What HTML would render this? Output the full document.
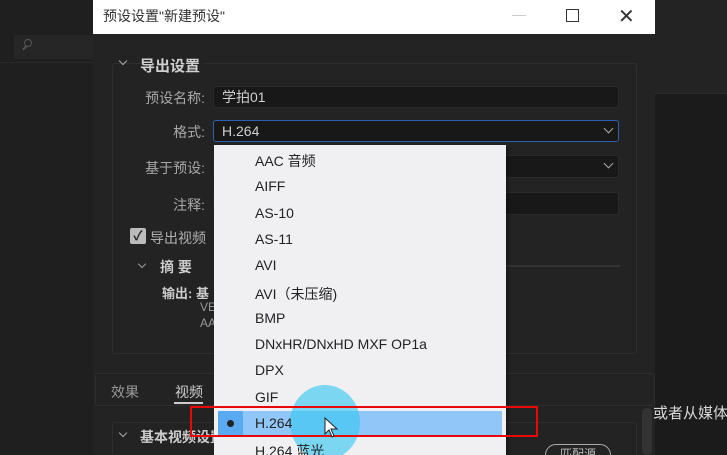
<!DOCTYPE html>
<html><head><meta charset="utf-8"><style>
*{margin:0;padding:0;box-sizing:border-box}
html,body{width:727px;height:455px;overflow:hidden}
body{background:#1f1f20;font-family:"Liberation Sans","Noto Sans CJK SC",sans-serif;position:relative;color:#b8b8b8}
.a{position:absolute;white-space:nowrap}
.lbl{position:absolute;font-size:14px;color:#a8a8a8;text-align:right;width:110px;left:95px}
.inp{position:absolute;left:213px;width:406px;height:22px;background:#181818;border:1px solid #2a2a2a;border-radius:3px;font-size:14px;color:#cfcfcf;padding-left:8px;line-height:20px}
.it{position:absolute;left:255px;font-size:14px;color:#222;white-space:nowrap}
.chev{position:absolute;right:6px;top:4px;width:7px;height:7px;border-right:1.5px solid #aaa;border-bottom:1.5px solid #aaa;transform:rotate(45deg)}
</style></head><body>
<div class="a" style="left:14px;top:35px;width:79px;height:24px;background:#262627;border-radius:2px"></div>
<div class="a" style="left:24px;top:39px;width:8px;height:8px;border:1.5px solid #555;border-radius:50%"></div>
<div class="a" style="left:22px;top:47px;width:5px;height:1.5px;background:#555;transform:rotate(-45deg)"></div>
<div class="a" style="left:0;top:62px;width:93px;height:1px;background:#2b2b2c"></div>
<div class="a" style="left:655px;top:0;width:72px;height:93px;background:#232324"></div>
<div class="a" style="left:655px;top:93px;width:72px;height:362px;background:#1b1b1c;border-top:1px solid #2a2a2a"></div>
<div class="a" style="left:93px;top:0;width:562px;height:455px;background:#232324"></div>
<div class="a" style="left:93px;top:0;width:562px;height:34px;background:#fff"></div>
<div class="a" style="left:103px;top:6px;font-size:14px;color:#333">预设设置"新建预设"</div>
<div class="a" style="left:512px;top:15px;width:14px;height:1px;background:#ccc"></div>
<div class="a" style="left:566px;top:9px;width:13px;height:13px;border:1.3px solid #333"></div>
<div class="a" style="left:618px;top:4px;font-size:20px;color:#333">✕</div>
<div class="a" style="left:112px;top:63px;width:525px;height:291px;border:1px solid #2e2e2f;border-radius:3px"></div>
<div class="a" style="left:120px;top:58px;width:6px;height:6px;border-right:1.5px solid #aaa;border-bottom:1.5px solid #aaa;transform:rotate(45deg)"></div>
<div class="a" style="left:140px;top:55px;font-size:15px;font-weight:bold;color:#d0d0d0;background:#232324;padding-right:4px">导出设置</div>
<div class="lbl" style="top:88px">预设名称:</div>
<div class="inp" style="top:86px">学拍01</div>
<div class="lbl" style="top:122px">格式:</div>
<div class="inp" style="top:120px;border:1.5px solid #2f5fb0">H.264<div class="chev"></div></div>
<div class="lbl" style="top:158px">基于预设:</div>
<div class="inp" style="top:155px;height:23px"><div class="chev"></div></div>
<div class="lbl" style="top:195px">注释:</div>
<div class="inp" style="top:192px;height:23px"></div>
<div class="a" style="left:130px;top:228px;width:16px;height:16px;background:#bbb;border-radius:2px;color:#222;font-size:13px;line-height:16px;text-align:center;font-weight:bold">✓</div>
<div class="a" style="left:150px;top:228px;font-size:14px;color:#b0b0b0">导出视频</div>
<div class="a" style="left:139px;top:261px;width:6px;height:6px;border-right:1.5px solid #999;border-bottom:1.5px solid #999;transform:rotate(45deg)"></div>
<div class="a" style="left:160px;top:257px;font-size:14px;font-weight:bold;color:#ccc">摘 要</div>
<div class="a" style="left:506px;top:265px;width:114px;height:2px;background:#333"></div>
<div class="a" style="left:162px;top:283px;font-size:13px;font-weight:bold;color:#ccc">输出: 基</div>
<div class="a" style="left:200px;top:300px;font-size:12px;color:#999">VE</div>
<div class="a" style="left:200px;top:316px;font-size:12px;color:#999">AA</div>
<div class="a" style="left:95px;top:373px;width:560px;height:33px;border:1px solid #2e2e2f;border-radius:3px"></div>
<div class="a" style="left:111px;top:382px;font-size:14px;color:#999">效果</div>
<div class="a" style="left:175px;top:382px;font-size:14px;color:#ccc">视频</div>
<div class="a" style="left:174px;top:402px;width:29px;height:2px;background:#ccc"></div>
<div class="a" style="left:112px;top:422px;width:525px;height:40px;border:1px solid #2e2e2f;border-radius:3px"></div>
<div class="a" style="left:120px;top:430px;width:6px;height:6px;border-right:1.5px solid #aaa;border-bottom:1.5px solid #aaa;transform:rotate(45deg)"></div>
<div class="a" style="left:140px;top:427px;font-size:14px;font-weight:bold;color:#ccc">基本视频设置</div>
<div class="a" style="left:545px;top:444px;width:66px;height:22px;border:1px solid #aaa;border-radius:11px;font-size:12px;text-align:center;color:#bbb">匹配源</div>
<div class="a" style="left:642px;top:408px;width:10px;height:47px;background:#333;border-radius:5px"></div>
<div class="a" style="left:653px;top:402px;font-size:15px;color:#d8d8d8">或者从媒体</div>
<div class="a" style="left:214px;top:145px;width:292px;height:310px;background:#f0f0f2;box-shadow:2px 2px 4px rgba(0,0,0,.4)"></div>
<div class="it" style="top:151px">AAC 音频</div>
<div class="it" style="top:178px">AIFF</div>
<div class="it" style="top:205px">AS-10</div>
<div class="it" style="top:231px">AS-11</div>
<div class="it" style="top:257px">AVI</div>
<div class="it" style="top:284px">AVI（未压缩)</div>
<div class="it" style="top:310px">BMP</div>
<div class="it" style="top:336px">DNxHR/DNxHD MXF OP1a</div>
<div class="it" style="top:362px">DPX</div>
<div class="it" style="top:389px">GIF</div>
<div class="a" style="left:218px;top:411px;width:284px;height:25px;background:#90c6f8"></div>
<div class="a" style="left:218px;top:411px;width:25px;height:25px;background:#5aaaf2"></div>
<div class="a" style="left:227px;top:420px;width:7px;height:7px;background:#222;border-radius:50%"></div>
<div class="a" style="left:290px;top:385px;width:70px;height:75px;background:rgba(60,200,240,.65);border-radius:50%"></div>
<div class="it" style="top:415px">H.264</div>
<div class="it" style="top:441px">H.264 蓝光</div>
<div class="a" style="left:190px;top:406px;width:348px;height:31px;border:2.5px solid #e80808"></div>
<svg class="a" style="left:324px;top:417px" width="16" height="22" viewBox="0 0 16 22"><path d="M1 1 L1 17 L5 13 L8 20 L10 19 L7 12 L13 12 Z" fill="#fff" stroke="#222" stroke-width="1"/></svg>
</body></html>
